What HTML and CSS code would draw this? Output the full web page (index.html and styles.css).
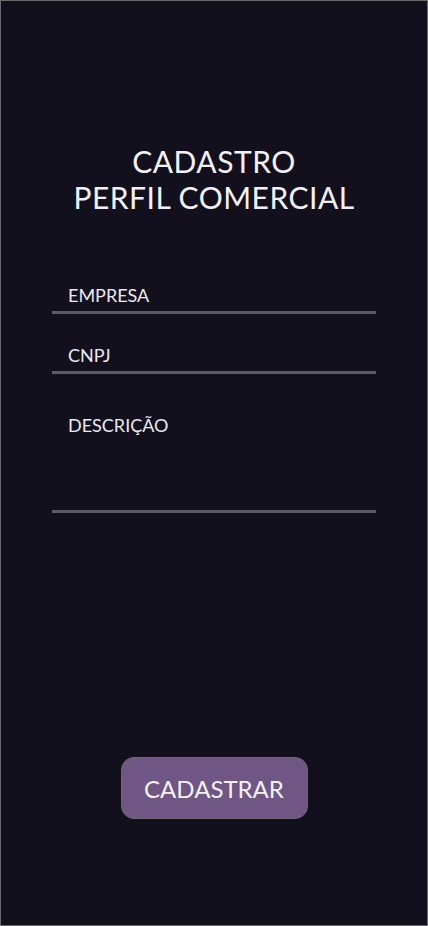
FILE: index.html
```html
<!DOCTYPE html>
<html lang="pt-BR">
<head>
<meta charset="utf-8">
<title>Cadastro Perfil Comercial</title>
<link rel="stylesheet" href="styles.css">
</head>
<body>
<main class="screen">
  <h1 class="title">CADASTRO<br>PERFIL COMERCIAL</h1>
  <form class="form">
    <label class="field"><span class="label">EMPRESA</span></label>
    <label class="field"><span class="label">CNPJ</span></label>
    <label class="field field-tall"><span class="label">DESCRIÇÃO</span></label>
  </form>
  <button class="button" type="button">CADASTRAR</button>
</main>
</body>
</html>
```

FILE: styles.css
```css
* { box-sizing: border-box; }
html, body { margin: 0; padding: 0; background: #13101e; }
.screen {
  width: 428px;
  height: 926px;
  border: 1px solid #6a6a6a;
  background: #13101e;
  display: flex;
  flex-direction: column;
  align-items: center;
  font-family: Lato, "Open Sans", sans-serif;
  color: #f2f0f4;
}
.title {
  margin: 142px 0 0;
  font-size: 30px;
  line-height: 36px;
  font-weight: 400;
  text-align: center;
  letter-spacing: 0.5px;
}
.form {
  align-self: stretch;
  margin: 39px 51px 0;
  display: flex;
  flex-direction: column;
}
.field {
  height: 60px;
  border-bottom: 3px solid #5d5a63;
  display: flex;
  flex-direction: column;
  justify-content: flex-end;
  padding: 0 0 5px 16px;
}
.field-tall {
  height: 139px;
  justify-content: flex-start;
  padding-top: 40px;
}
.label {
  font-size: 18px;
  line-height: 22px;
  color: #ebe9ee;
  letter-spacing: 0;
}
.button {
  margin-top: 244px;
  width: 187px;
  height: 62px;
  border: 1px solid #6c6a6c;
  border-radius: 13px;
  background: #6f5684;
  color: #f4f2f6;
  font-family: Lato, "Open Sans", sans-serif;
  font-size: 24px;
  letter-spacing: 0;
  padding: 0;
}
```
